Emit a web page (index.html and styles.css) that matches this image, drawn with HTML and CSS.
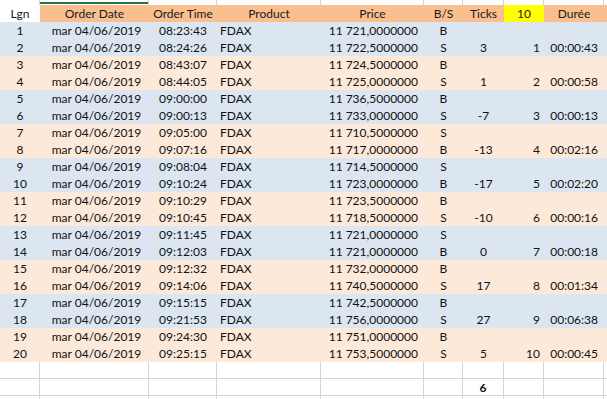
FILE: index.html
```html
<!DOCTYPE html>
<html>
<head>
<meta charset="utf-8">
<link rel="stylesheet" href="styles.css">
</head>
<body>
<div class="sheet">
  <div class="row strip">
    <div class="c"></div><div class="c sel"></div><div class="c"></div><div class="c"></div><div class="c"></div><div class="c"></div><div class="c"></div><div class="c"></div><div class="c"></div><div class="c"></div>
  </div>
  <div class="row head">
    <div class="c ctr lgn">Lgn</div>
    <div class="c ctr">Order Date</div>
    <div class="c ctr">Order Time</div>
    <div class="c ctr">Product</div>
    <div class="c ctr">Price</div>
    <div class="c ctr">B/S</div>
    <div class="c ctr">Ticks</div>
    <div class="c ctr yel">10</div>
    <div class="c ctr">Durée</div>
    <div class="c"></div>
  </div>
  <div id="rows"></div>
  <div class="row empty">
    <div class="c"></div><div class="c"></div><div class="c"></div><div class="c"></div><div class="c"></div><div class="c"></div><div class="c"></div><div class="c"></div><div class="c"></div><div class="c"></div>
  </div>
  <div class="row empty">
    <div class="c"></div><div class="c"></div><div class="c"></div><div class="c"></div><div class="c"></div><div class="c"></div><div class="c ctr bold">6</div><div class="c"></div><div class="c"></div><div class="c"></div>
  </div>
  <div class="row empty">
    <div class="c"></div><div class="c"></div><div class="c"></div><div class="c"></div><div class="c"></div><div class="c"></div><div class="c"></div><div class="c"></div><div class="c"></div><div class="c"></div>
  </div>
</div>
<script>
var data = [
 ["08:23:43","11 721,0000000","B","","",""],
 ["08:24:26","11 722,5000000","S","3","1","00:00:43"],
 ["08:43:07","11 724,5000000","B","","",""],
 ["08:44:05","11 725,0000000","S","1","2","00:00:58"],
 ["09:00:00","11 736,5000000","B","","",""],
 ["09:00:13","11 733,0000000","S","-7","3","00:00:13"],
 ["09:05:00","11 710,5000000","S","","",""],
 ["09:07:16","11 717,0000000","B","-13","4","00:02:16"],
 ["09:08:04","11 714,5000000","S","","",""],
 ["09:10:24","11 723,0000000","B","-17","5","00:02:20"],
 ["09:10:29","11 723,5000000","B","","",""],
 ["09:10:45","11 718,5000000","S","-10","6","00:00:16"],
 ["09:11:45","11 721,0000000","S","","",""],
 ["09:12:03","11 721,0000000","B","0","7","00:00:18"],
 ["09:12:32","11 732,0000000","B","","",""],
 ["09:14:06","11 740,5000000","S","17","8","00:01:34"],
 ["09:15:15","11 742,5000000","B","","",""],
 ["09:21:53","11 756,0000000","S","27","9","00:06:38"],
 ["09:24:30","11 751,0000000","B","","",""],
 ["09:25:15","11 753,5000000","S","5","10","00:00:45"]
];
var html = "";
for (var i = 0; i < data.length; i++) {
  var d = data[i];
  var cls = (Math.floor(i / 2) % 2 === 0) ? "blue" : "peach";
  html += '<div class="row data ' + cls + '">' +
    '<div class="c ctr">' + (i + 1) + '</div>' +
    '<div class="c ctr date">mar 04/06/2019</div>' +
    '<div class="c ctr">' + d[0] + '</div>' +
    '<div class="c left">FDAX</div>' +
    '<div class="c right price">' + d[1] + '</div>' +
    '<div class="c ctr">' + d[2] + '</div>' +
    '<div class="c ctr">' + d[3] + '</div>' +
    '<div class="c right num">' + d[4] + '</div>' +
    '<div class="c right dur">' + d[5] + '</div>' +
    '<div class="c"></div>' +
    '</div>';
}
document.getElementById("rows").innerHTML = html;
</script>
</body>
</html>
```

FILE: styles.css
```css
html, body {
  margin: 0;
  padding: 0;
  background: #ffffff;
}
body {
  width: 607px;
  height: 399px;
  overflow: hidden;
  font-family: Lato, "Open Sans", sans-serif;
  font-size: 12px;
  color: #111111;
}
.sheet {
  width: 624px;
}
.row {
  display: grid;
  grid-template-columns: 40px 109px 68px 104px 103px 39px 41px 40px 60px 20px;
  height: 17px;
}
.c {
  box-sizing: border-box;
  height: 100%;
  display: flex;
  align-items: center;
  white-space: nowrap;
  overflow: hidden;
  line-height: 17px;
}
.ctr { justify-content: center; }
.left { justify-content: flex-start; padding-left: 3px; }
.right { justify-content: flex-end; }
.price { padding-right: 6px; }
.num { padding-right: 4px; }
.dur { padding-right: 6px; }
.date { padding-left: 4px; }

.strip {
  height: 5px;
}
.strip .c {
  border-right: 1px solid #d4d4d4;
}
.strip .sel {
  border-right: 1px solid #d4d4d4;
  background: linear-gradient(to bottom, transparent 0, transparent 2px, #217346 2px, #217346 4px, transparent 4px);
}

.head {
  background: #f9bf8f;
  color: #1a1a1a;
}
.head .lgn {
  background: #ffffff;
}
.head .yel {
  background: #ffff00;
}

.blue { background: #dce6f1; }
.peach { background: #fde9d9; }

.empty .c {
  border-right: 1px solid #d4d4d4;
  border-bottom: 1px solid #d4d4d4;
}
.bold {
  font-weight: bold;
}
```
